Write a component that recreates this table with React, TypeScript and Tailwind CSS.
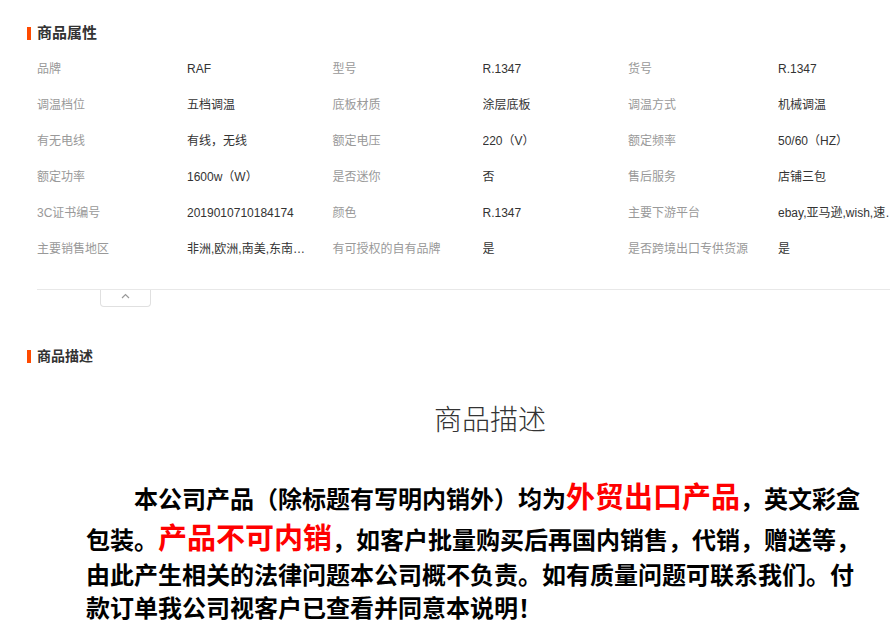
const rows: [string, string][][] = [
  [["品牌", "RAF"], ["型号", "R.1347"], ["货号", "R.1347"]],
  [["调温档位", "五档调温"], ["底板材质", "涂层底板"], ["调温方式", "机械调温"]],
  [["有无电线", "有线，无线"], ["额定电压", "220（V）"], ["额定频率", "50/60（HZ）"]],
  [["额定功率", "1600w（W）"], ["是否迷你", "否"], ["售后服务", "店铺三包"]],
  [["3C证书编号", "2019010710184174"], ["颜色", "R.1347"], ["主要下游平台", "ebay,亚马逊,wish,速卖通"]],
  [["主要销售地区", "非洲,欧洲,南美,东南亚,北美"], ["有可授权的自有品牌", "是"], ["是否跨境出口专供货源", "是"]],
];

const SectionTitle = ({ text, size }: { text: string; size: string }) => (
  <div className="flex items-center ml-[27px] h-[18px]">
    <span className="w-[4px] h-[13px] bg-[#ff4a00]" />
    <span className={`ml-[6px] font-bold text-[#333] leading-[18px] ${size}`}>{text}</span>
  </div>
);

const App = () => {
  return (
    <div className="w-[890px] h-[622px] overflow-hidden bg-white font-['Liberation_Sans','Noto_Sans_CJK_SC',sans-serif]">
      <div className="w-[980px]">
        <section className="pt-[24px]">
          <SectionTitle text="商品属性" size="text-[15px]" />
          <div className="ml-[37px] mt-[9px] text-[12px]">
            {rows.map((row, i) => (
              <div key={i} className="flex h-[36px] items-center">
                {row.map(([label, value]) => (
                  <div key={label} className="flex w-[295.5px] shrink-0">
                    <span className="w-[150px] shrink-0 text-[#999]">{label}</span>
                    <span className="w-[120px] truncate text-[#333]">{value}</span>
                  </div>
                ))}
              </div>
            ))}
          </div>
          <div className="ml-[37px] mt-[22px] border-t border-[#e8e8e8]">
            <div className="ml-[63px] w-[51px] h-[17px] border border-t-0 border-[#e0e0e0] rounded-b-[4px] flex justify-center pt-[3px]">
              <svg width="9" height="6" viewBox="0 0 9 6">
                <polyline points="1,5 4.5,1.5 8,5" fill="none" stroke="#999" strokeWidth="1.2" />
              </svg>
            </div>
          </div>
        </section>

        <section className="mt-[40px]">
          <SectionTitle text="商品描述" size="text-[14px]" />
          <h2 className="mt-[35px] text-center text-[28px] leading-[42px] font-light text-[#333] font-['Liberation_Serif','Noto_Sans_CJK_SC',serif]">
            商品描述
          </h2>
          <p className="ml-[86px] mt-[33px] w-[784px] text-[24px] leading-[33px] font-bold text-black indent-[48px] font-['Noto_Sans_CJK_SC',sans-serif]">
            本公司产品（除标题有写明内销外）均为
            <span className="text-[29px] leading-[41px] text-[#ff0000]">外贸出口产品</span>
            ，英文彩盒包装。
            <span className="text-[29px] leading-[41px] text-[#ff0000]">产品不可内销</span>
            ，如客户批量购买后再国内销售，代销，赠送等，由此产生相关的法律问题本公司概不负责。如有质量问题可联系我们。付款订单我公司视客户已查看并同意本说明！
          </p>
        </section>
      </div>
    </div>
  );
};

export default App;
